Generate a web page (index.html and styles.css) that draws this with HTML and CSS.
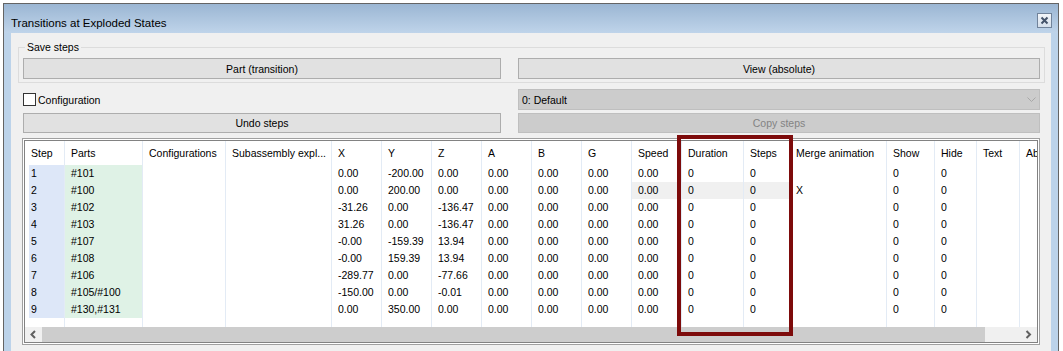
FILE: index.html
```html
<!DOCTYPE html>
<html lang="en">
<head>
  <meta charset="UTF-8">
  <title>Transitions at Exploded States</title>
  <link rel="stylesheet" href="styles.css">
</head>
<body>

<div class="window">
  <div class="titlebar">
    <span class="title">Transitions at Exploded States</span>
    <button class="close" title="Close">
      <svg width="13" height="13" viewBox="0 0 13 13"><path d="M3.5 3.5L9.5 9.5M9.5 3.5L3.5 9.5" stroke="#44536a" stroke-width="2" fill="none"/></svg>
    </button>
  </div>

  <div class="client">
    <fieldset class="group">
      <legend>Save steps</legend>
      <div class="btn-row tall">
        <button class="btn">Part (transition)</button>
        <button class="btn">View (absolute)</button>
      </div>
    </fieldset>

    <div class="lower">
      <div class="btn-row tall">
        <label class="check"><span class="box"></span>Configuration</label>
        <div class="combo">
          <span>0: Default</span>
          <svg width="9" height="5" viewBox="0 0 9 5"><polyline points="0.5,0.5 4.5,4.5 8.5,0.5" stroke="#a8a8a8" fill="none"/></svg>
        </div>
      </div>
      <div class="btn-row second">
        <button class="btn">Undo steps</button>
        <button class="btn" disabled>Copy steps</button>
      </div>

      <div class="grid">
        <div class="grid-inner">
          <div class="viewport">
            <div class="row head">
              <span class="step">Step</span><span>Parts</span><span>Configurations</span><span>Subassembly expl...</span>
              <span>X</span><span>Y</span><span>Z</span><span>A</span><span>B</span><span>G</span><span>Speed</span>
              <span>Duration</span><span>Steps</span><span>Merge animation</span><span>Show</span><span>Hide</span><span>Text</span><span>Ab</span>
            </div>
            <div class="row data">
              <span class="step">1</span><span class="part">#101</span><span></span><span></span>
              <span>0.00</span><span>-200.00</span><span>0.00</span><span>0.00</span><span>0.00</span><span>0.00</span><span>0.00</span>
              <span>0</span><span>0</span><span></span><span>0</span><span>0</span><span></span><span></span>
            </div>
            <div class="row data">
              <span class="step">2</span><span class="part">#100</span><span></span><span></span>
              <span>0.00</span><span>200.00</span><span>0.00</span><span>0.00</span><span>0.00</span><span>0.00</span><span class="sel">0.00</span>
              <span class="sel">0</span><span class="sel">0</span><span>X</span><span>0</span><span>0</span><span></span><span></span>
            </div>
            <div class="row data">
              <span class="step">3</span><span class="part">#102</span><span></span><span></span>
              <span>-31.26</span><span>0.00</span><span>-136.47</span><span>0.00</span><span>0.00</span><span>0.00</span><span>0.00</span>
              <span>0</span><span>0</span><span></span><span>0</span><span>0</span><span></span><span></span>
            </div>
            <div class="row data">
              <span class="step">4</span><span class="part">#103</span><span></span><span></span>
              <span>31.26</span><span>0.00</span><span>-136.47</span><span>0.00</span><span>0.00</span><span>0.00</span><span>0.00</span>
              <span>0</span><span>0</span><span></span><span>0</span><span>0</span><span></span><span></span>
            </div>
            <div class="row data">
              <span class="step">5</span><span class="part">#107</span><span></span><span></span>
              <span>-0.00</span><span>-159.39</span><span>13.94</span><span>0.00</span><span>0.00</span><span>0.00</span><span>0.00</span>
              <span>0</span><span>0</span><span></span><span>0</span><span>0</span><span></span><span></span>
            </div>
            <div class="row data">
              <span class="step">6</span><span class="part">#108</span><span></span><span></span>
              <span>-0.00</span><span>159.39</span><span>13.94</span><span>0.00</span><span>0.00</span><span>0.00</span><span>0.00</span>
              <span>0</span><span>0</span><span></span><span>0</span><span>0</span><span></span><span></span>
            </div>
            <div class="row data">
              <span class="step">7</span><span class="part">#106</span><span></span><span></span>
              <span>-289.77</span><span>0.00</span><span>-77.66</span><span>0.00</span><span>0.00</span><span>0.00</span><span>0.00</span>
              <span>0</span><span>0</span><span></span><span>0</span><span>0</span><span></span><span></span>
            </div>
            <div class="row data">
              <span class="step">8</span><span class="part">#105/#100</span><span></span><span></span>
              <span>-150.00</span><span>0.00</span><span>-0.01</span><span>0.00</span><span>0.00</span><span>0.00</span><span>0.00</span>
              <span>0</span><span>0</span><span></span><span>0</span><span>0</span><span></span><span></span>
            </div>
            <div class="row data">
              <span class="step">9</span><span class="part">#130,#131</span><span></span><span></span>
              <span>0.00</span><span>350.00</span><span>0.00</span><span>0.00</span><span>0.00</span><span>0.00</span><span>0.00</span>
              <span>0</span><span>0</span><span></span><span>0</span><span>0</span><span></span><span></span>
            </div>
            <div class="row filler">
              <span class="step"></span><span></span><span></span><span></span>
              <span></span><span></span><span></span><span></span><span></span><span></span><span></span>
              <span></span><span></span><span></span><span></span><span></span><span></span><span></span>
            </div>
          </div>
          <div class="hscroll">
            <span class="arrow">
              <svg width="17" height="15" viewBox="0 0 17 15"><polyline points="10,4 6.5,7.5 10,11" stroke="#606060" stroke-width="2" fill="none"/></svg>
            </span>
            <span class="thumb"></span>
            <span class="track"></span>
            <span class="arrow">
              <svg width="17" height="15" viewBox="0 0 17 15"><polyline points="6.5,4 10,7.5 6.5,11" stroke="#606060" stroke-width="2" fill="none"/></svg>
            </span>
          </div>
        </div>
      </div>
    </div>
  </div>
</div>

<!-- annotation frame around Duration / Steps -->
<div class="callout"></div>

</body>
</html>
```

FILE: styles.css
```css
* {
  box-sizing: border-box;
}
body {
  margin: 0;
  background: #ffffff;
  font-family: 'Liberation Sans', Arial, sans-serif;
  font-size: 10.5px;
  color: #000;
}
.window {
  margin: 3px 0 0 3px;
  width: 1056px;
  height: 360px;
  border: 1px solid #646464;
  border-bottom: none;
  background: #bcd3ea;
  display: flex;
  flex-direction: column;
}
.titlebar {
  height: 29px;
  display: flex;
  justify-content: space-between;
  align-items: flex-start;
  padding: 0 6px 0 7px;
  background: linear-gradient(#9bb6d3, #bfd4ea);
}
.title {
  font-size: 11.5px;
  line-height: 14px;
  padding-top: 12px;
}
.close {
  margin-top: 9px;
  width: 15px;
  height: 15px;
  padding: 0;
  border: 1px solid #71839a;
  background: linear-gradient(#f3f6fa, #d5dfeb);
  display: flex;
  align-items: center;
  justify-content: center;
}
.client {
  flex: 1;
  margin: 0 7px;
  padding: 8px 6px 0 7px;
  background: #f0f0f0;
}
.group {
  margin: 0;
  padding: 4px 4px 3px 4px;
  border: 1px solid #dcdcdc;
}
.group legend {
  margin-left: 2px;
  padding: 0 2px;
  line-height: 13px;
}
.btn-row {
  display: grid;
  grid-template-columns: 478px 1fr;
  column-gap: 17px;
  height: 21px;
}
.btn-row.second {
  height: 20px;
  margin-top: 3px;
}
.btn {
  font: inherit;
  color: #000;
  padding: 0;
  height: 100%;
  border: 1px solid #adadad;
  background: #e1e1e1;
}
.btn:disabled {
  background: #cccccc;
  border-color: #bfbfbf;
  color: #838383;
}
.lower {
  margin: 6px 5px 0 4px;
}
.lower .btn-row {
  padding-left: 1px;
}
.check {
  display: flex;
  align-items: center;
  gap: 2px;
}
.check .box {
  width: 13px;
  height: 13px;
  border: 1px solid #333;
  background: #fff;
}
.combo {
  display: flex;
  align-items: center;
  justify-content: space-between;
  padding: 0 3px 0 3px;
  background: #cccccc;
  border: 1px solid #bfbfbf;
}
.grid {
  margin-top: 5px;
  height: 207px;
  border: 1px solid #a0a0a0;
  padding: 1px;
  background: #fff;
}
.grid-inner {
  height: 100%;
  border: 1px solid #828282;
  display: flex;
  flex-direction: column;
}
.viewport {
  flex: 1;
  overflow: hidden;
  display: flex;
  flex-direction: column;
}
.row {
  display: grid;
  grid-template-columns: 40px 78px 83px 106px repeat(7, 50px) 62px 46px 97px 48px 42px 43px 60px;
  width: 1055px;
}
.row span {
  border-right: 1px solid #e3ebf5;
  padding-left: 6px;
  white-space: nowrap;
  overflow: hidden;
}
.row .step {
  border-left: 4px solid #fff;
  padding-left: 2px;
}
.head span {
  height: 24px;
  line-height: 24px;
}
.data span {
  height: 17px;
  line-height: 17px;
}
.data .step {
  background: #dde7f8;
}
.data .part {
  background: #dff2e6;
}
.data .sel {
  background: #f0f0f0;
}
.filler {
  flex: 1;
}
.hscroll {
  height: 15px;
  display: flex;
  background: #f0f0f0;
}
.hscroll .arrow {
  width: 17px;
  height: 15px;
}
.hscroll .thumb {
  width: 943px;
  background: #cdcdcd;
}
.hscroll .track {
  flex: 1;
}
.callout {
  position: absolute;
  left: 677px;
  top: 135px;
  width: 116px;
  height: 201px;
  border: 4px solid #7d0b0b;
}
```
